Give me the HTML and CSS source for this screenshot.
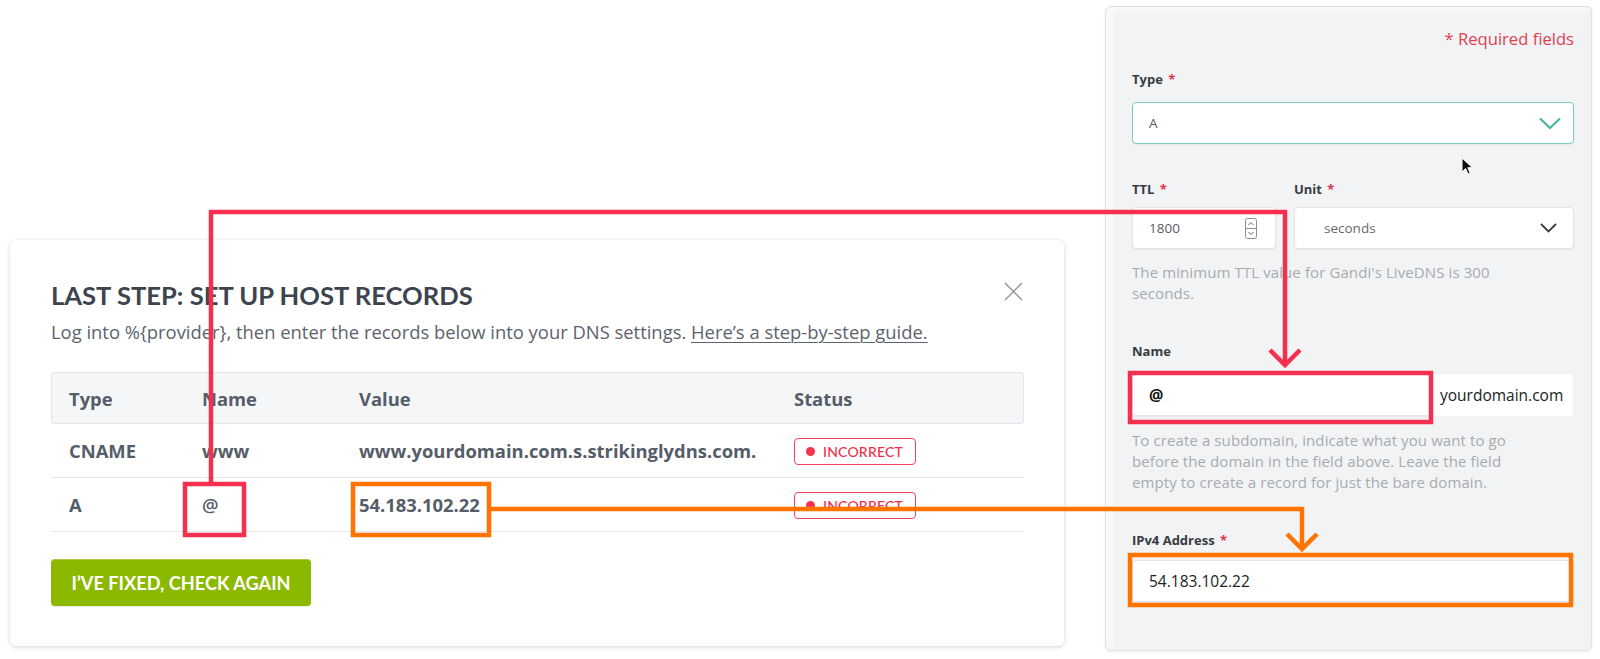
FILE: index.html
```html
<!DOCTYPE html>
<html lang="en">
<head>
<meta charset="utf-8">
<title>Set up host records</title>
<link rel="stylesheet" href="styles.css">
</head>
<body>
<div class="canvas">
  <section class="card">
    <div class="card-head">
      <h1 class="title">LAST STEP: SET UP HOST RECORDS</h1>
      <span class="close" aria-label="Close">
        <svg width="19" height="19" viewBox="0 0 19 19"><path d="M1 1 L18 18 M18 1 L1 18" stroke="#8f959c" stroke-width="1.4" fill="none"/></svg>
      </span>
    </div>
    <p class="lead">Log into %{provider}, then enter the records below into your DNS settings. <a class="guide">Here’s a step-by-step guide.</a></p>
    <div class="table">
      <div class="row head"><span>Type</span><span>Name</span><span>Value</span><span>Status</span></div>
      <div class="row"><span>CNAME</span><span>www</span><span>www.yourdomain.com.s.strikinglydns.com.</span><span><span class="badge"><i class="dot"></i>INCORRECT</span></span></div>
      <div class="row"><span>A</span><span class="at">@</span><span>54.183.102.22</span><span><span class="badge"><i class="dot"></i>INCORRECT</span></span></div>
    </div>
    <button class="btn">I’VE FIXED, CHECK AGAIN</button>
  </section>

  <aside class="panel">
    <p class="req">* Required fields</p>
    <label class="lbl lbl-type">Type <em>*</em></label>
    <div class="field select teal">
      <span>A</span>
      <svg width="22" height="13" viewBox="0 0 22 13"><polyline points="1,1.5 11,11 21,1.5" fill="none" stroke="#49b59e" stroke-width="2.2"/></svg>
    </div>
    <div class="pair">
      <div class="col ttl">
        <label class="lbl">TTL <em>*</em></label>
        <div class="field num">
          <span>1800</span>
          <svg width="12" height="21" viewBox="0 0 12 21"><rect x="0.5" y="0.5" width="11" height="20" rx="2" fill="#fff" stroke="#8a8e93"/><line x1="1" y1="10.5" x2="11" y2="10.5" stroke="#8a8e93"/><polyline points="3.5,7 6,4.5 8.5,7" fill="none" stroke="#666"/><polyline points="3.5,14 6,16.5 8.5,14" fill="none" stroke="#666"/></svg>
        </div>
      </div>
      <div class="col unit">
        <label class="lbl">Unit <em>*</em></label>
        <div class="field select plain">
          <span>seconds</span>
          <svg width="17" height="10" viewBox="0 0 17 10"><polyline points="1,1 8.5,8.5 16,1" fill="none" stroke="#3a3d40" stroke-width="1.8"/></svg>
        </div>
      </div>
    </div>
    <p class="help help-ttl">The minimum TTL value for Gandi's LiveDNS is 300 seconds.</p>
    <label class="lbl lbl-name">Name</label>
    <div class="namewrap">
      <div class="field name"><b>@</b></div>
      <div class="suffix">yourdomain.com</div>
    </div>
    <p class="help help-name">To create a subdomain, indicate what you want to go before the domain in the field above. Leave the field empty to create a record for just the bare domain.</p>
    <label class="lbl lbl-ip">IPv4 Address <em>*</em></label>
    <div class="field ip">54.183.102.22</div>
  </aside>

  <svg class="overlay" width="1600" height="659" viewBox="0 0 1600 659">
    <g fill="none" stroke="#f5304f" stroke-width="4.5" stroke-linejoin="miter">
      <rect x="185" y="484" width="59" height="51"/>
      <polyline points="211,484 211,212 1285,212 1285,365"/>
      <polyline points="1270,350 1285,365 1300,350"/>
      <rect x="1130" y="373" width="301" height="49"/>
    </g>
    <g fill="none" stroke="#ff7300" stroke-width="4.5" stroke-linejoin="miter">
      <rect x="353" y="484" width="136" height="51"/>
      <polyline points="489,509 1302,509 1302,549"/>
      <polyline points="1287,534 1302,549 1317,534"/>
      <rect x="1130" y="555" width="441" height="50"/>
    </g>
  </svg>

  <svg class="cursor" width="13" height="19" viewBox="0 0 13 19"><path d="M1 1 L1 15 L4.5 11.5 L7 17 L9.2 16 L6.8 10.7 L11.5 10.7 Z" fill="#111" stroke="#fff" stroke-width="1"/></svg>
</div>
</body>
</html>
```

FILE: styles.css
```css
* { box-sizing: border-box; margin: 0; padding: 0; }
html, body { width: 1600px; height: 659px; background: #fff; overflow: hidden; }
body { font-family: "Open Sans", "Noto Sans", sans-serif; }

.canvas { position: relative; width: 1600px; height: 659px; display: flex; align-items: flex-start; }

/* ---------- left card ---------- */
.card {
  margin: 240px 0 0 10px;
  width: 1054px;
  height: 406px;
  background: #fff;
  border-radius: 6px;
  box-shadow: 0 0 3px rgba(0,0,0,.10), 0 2px 5px rgba(0,0,0,.10);
  padding: 40px 40px 40px 41px;
  display: flex;
  flex-direction: column;
  align-items: flex-start;
}
.card-head { display: flex; justify-content: space-between; align-items: flex-start; width: 100%; }
.title { font-family: Lato, "Open Sans", sans-serif; font-weight: 700; font-size: 25.6px; line-height: 30px; color: #3d444e; }
.close { display: block; width: 19px; height: 19px; margin-top: 2px; margin-right: 1px; }
.lead { margin-top: 10px; font-size: 18.4px; line-height: 24px; color: #5c636d; white-space: nowrap; }
.guide { color: inherit; text-decoration: underline; text-underline-offset: 3px; text-decoration-thickness: 1px; }

.table { margin-top: 28px; width: 100%; }
.row {
  display: grid;
  grid-template-columns: 133px 157px 435px 1fr;
  align-items: center;
  padding-left: 18px;
  height: 54px;
  border-bottom: 1px solid #e5e7ea;
  font-weight: 700;
  font-size: 18.4px;
  color: #555d68;
  white-space: nowrap;
}
.row.head { height: 52px; border: 1px solid #e2e5e9; border-radius: 3px; background: #f5f6f8; padding-left: 17px; }
.at { font-weight: 600; }

.badge {
  display: inline-flex; align-items: center; gap: 8px;
  height: 27px; padding: 0 12px 0 11px;
  border: 1px solid #f3425c; border-radius: 4px;
  font-family: Lato, sans-serif; font-size: 14px; font-weight: 500; letter-spacing: .2px;
  color: #f0304a;
}
.dot { display: block; width: 9px; height: 9px; border-radius: 50%; background: #f5334f; }

.btn {
  margin-top: 27px;
  width: 260px; height: 47px;
  border: none; border-radius: 4px;
  background: #8bb900;
  box-shadow: inset 0 1px 0 rgba(255,255,255,.25), 0 1px 1px rgba(0,0,0,.08);
  color: #fff;
  font-family: Lato, sans-serif; font-weight: 700; font-size: 18.2px;
}

/* ---------- right panel ---------- */
.panel {
  margin: 6px 0 0 41px;
  width: 487px; height: 645px;
  background: #f1f3f5;
  border: 1px solid #dde3e5;
  border-radius: 6px;
  box-shadow: inset 7px 4px 0 #f6f8f9, 0 1px 3px rgba(0,0,0,.08);
  padding: 21px 17px 0 26px;
  display: flex; flex-direction: column;
}
.req { text-align: right; font-size: 16.6px; line-height: 22px; color: #e0414f; }
.lbl { display: block; font-size: 13px; font-weight: 700; line-height: 18px; color: #383b3f; }
.lbl em { font-style: normal; color: #e0314a; margin-left: 2px; }
.lbl-type { margin-top: 20px; }

.field {
  height: 42px;
  background: #fff;
  border: 1px solid #e1e5e8;
  border-radius: 4px;
  box-shadow: 0 1px 2px rgba(0,0,0,.06);
  display: flex; align-items: center; justify-content: space-between;
  padding: 0 14px 0 16px;
  font-size: 13.5px; color: #5a5d61;
}
.select.teal { margin-top: 14px; border: 1.5px solid #7ccfbc; padding-right: 12px; }
.select.plain { padding-left: 29px; padding-right: 16px; color: #66696d; }
.num { padding-right: 18px; }

.pair { display: flex; gap: 18px; margin-top: 36px; }
.pair .field { margin-top: 9px; }
.ttl { width: 144px; }
.unit { flex: 1; }

.help { font-size: 15px; line-height: 21px; color: #a8acb0; letter-spacing: .1px; padding-right: 30px; }
.help-ttl { margin-top: 13px; }
.lbl-name { margin-top: 38px; }
.namewrap { display: flex; margin-top: 14px; }
.name { width: 298px; border-radius: 4px 0 0 4px; font-size: 16px; color: #111; }
.suffix {
  flex: 1; height: 42px; margin-right: 1px;
  background: #fff; border-radius: 0 4px 4px 0;
  display: flex; align-items: center; padding-left: 10px;
  font-size: 15.5px; color: #222;
}
.help-name { margin-top: 14px; }
.lbl-ip { margin-top: 38px; }
.ip { margin-top: 11px; font-size: 15.5px; color: #222; justify-content: flex-start; }

/* ---------- annotation layer ---------- */
.overlay { position: absolute; left: 0; top: 0; pointer-events: none; }
.cursor { position: absolute; left: 1461px; top: 157px; }
```
